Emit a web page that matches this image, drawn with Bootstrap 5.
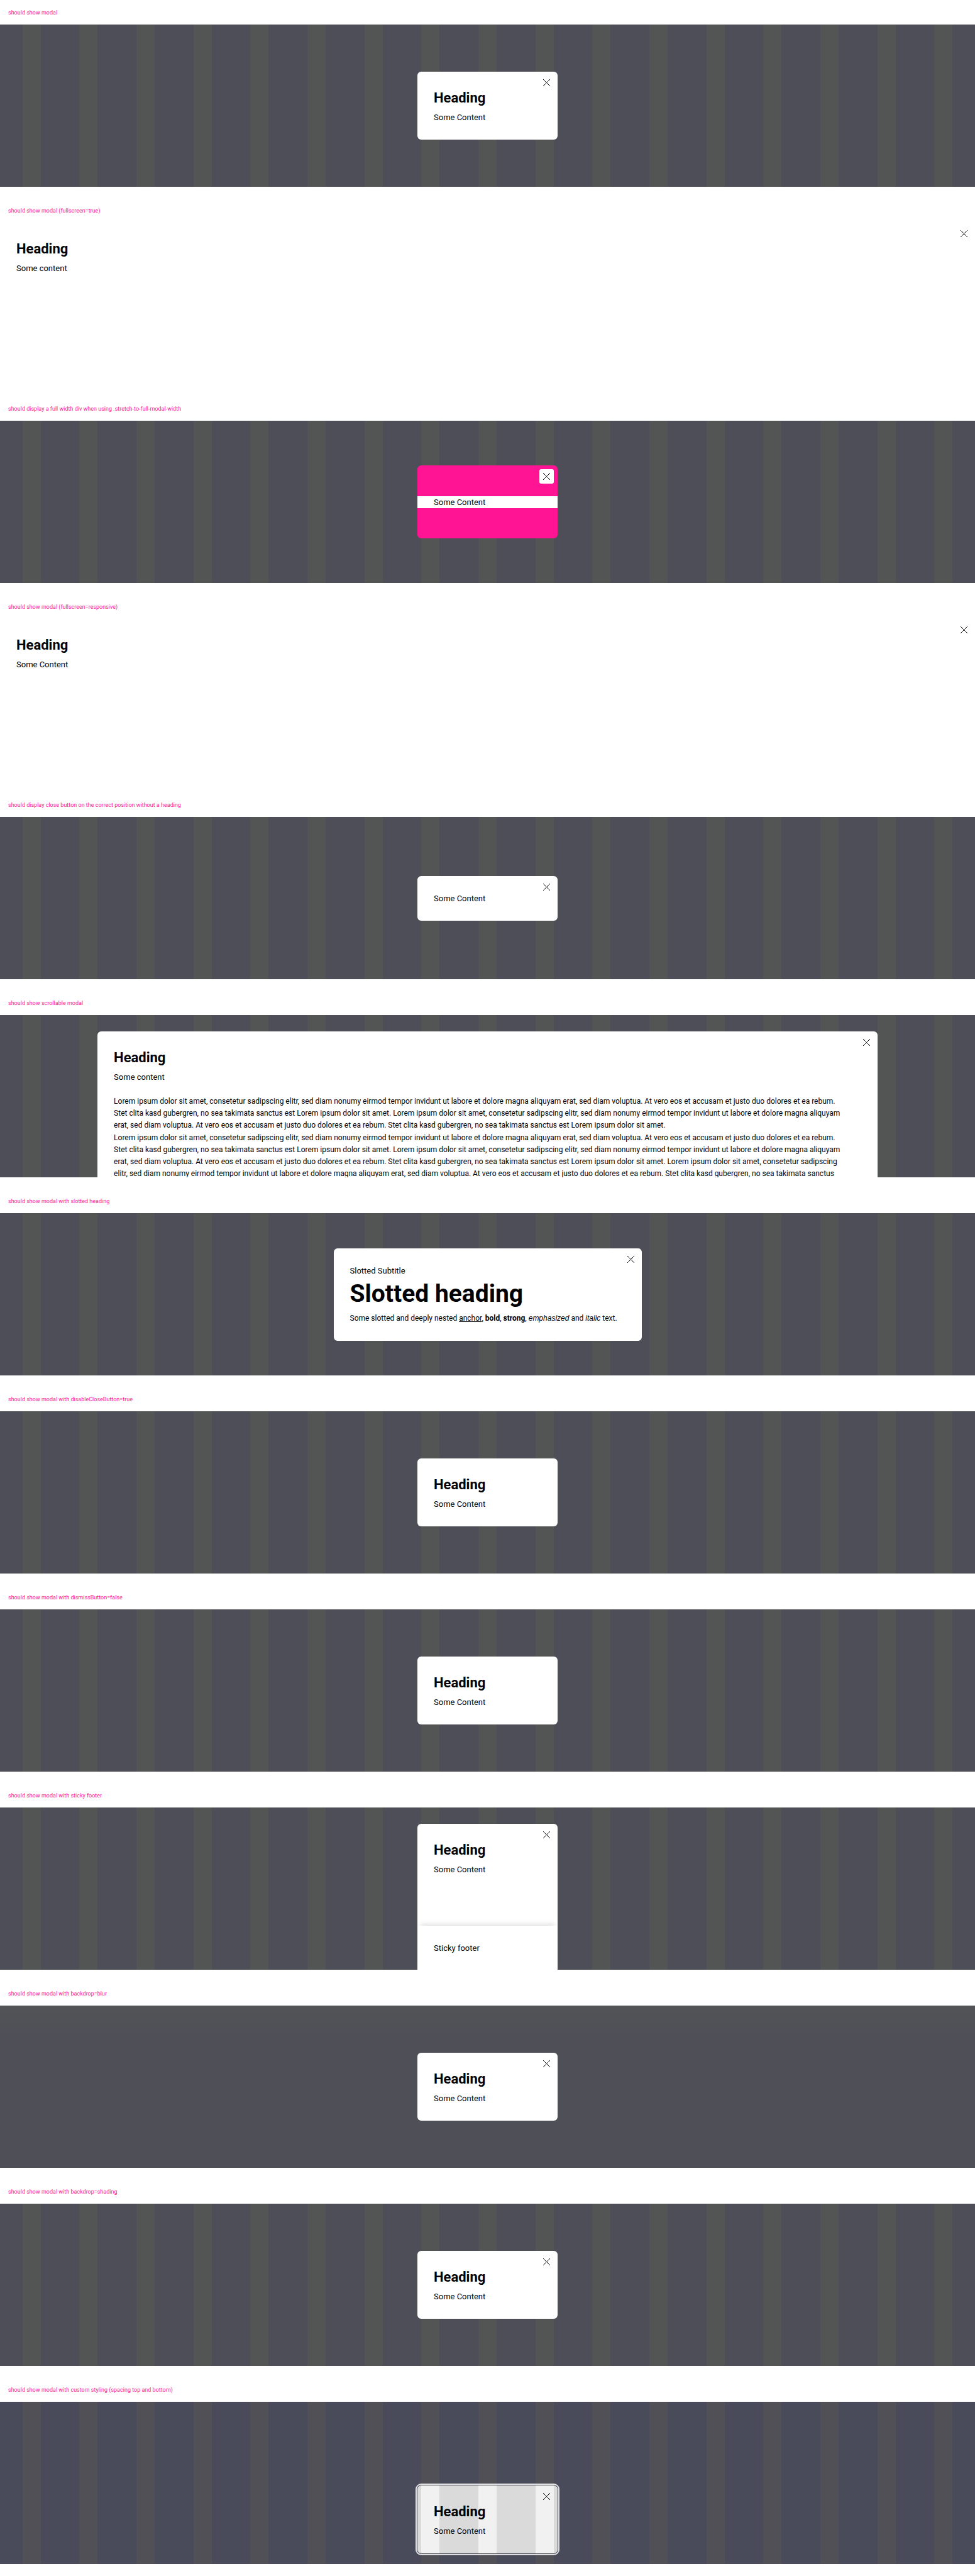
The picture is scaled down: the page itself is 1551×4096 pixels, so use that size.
<!DOCTYPE html>
<html lang="en">
<head>
<meta charset="utf-8">
<meta name="viewport" content="width=device-width, initial-scale=1">
<title>Modal overview</title>
<link href="https://cdn.jsdelivr.net/npm/bootstrap@5.3.0/dist/css/bootstrap.min.css" rel="stylesheet">
<style>
  body { font-family: Roboto, "Liberation Sans", sans-serif; font-size: 13px; line-height: 19px; color: #010205; background: #fff; padding-bottom: 18px; }
  .case-label { font-size: 9px; line-height: 14px; font-weight: 400; color: #ff1493; height: 57px; padding: 0 13px 12px; }
  .case-label-first { height: 39px; }
  .stage { height: 258px; --base: #4e4e58; --band: #535555;
    background: repeating-linear-gradient(90deg, var(--base) 0 2.2917%, var(--band) 2.2917% 4.1667%, var(--base) 4.1667% 5.8464%); }
  .stage-plain { background: #fff; }
  .stage-blur { background: linear-gradient(#525455, #4f4f58 46px); }
  .stage-top { padding-top: 26px; }
  .stage-custom { --base: #4a4b5a; --band: #515057; padding-bottom: 17px; }
  .panel { background: #fff; border-radius: 6px; padding: 26px; min-width: 223px; }
  .panel-wide { width: 80%; }
  .panel-full { width: 100%; border-radius: 0; }
  .panel-slotted { min-width: 490px; }
  .panel-slotted p:last-child { font-size: 12px; }
  .panel h2 { font-size: 22px; line-height: 32px; font-weight: 700; margin: 0 0 5px; }
  .panel h1 { font-size: 39px; line-height: 50px; font-weight: 700; margin: 2px 0 5px; }
  .panel p { margin: 0; }
  .panel em, .panel i { font-family: "Liberation Sans", sans-serif; font-style: italic; }
  .close-x { top: 6px; right: 6px; width: 23px; height: 23px; border: 0; border-radius: 3px; background: #fff; padding: 0; }
  .close-x svg { width: 13px; height: 13px; stroke: #010205; stroke-width: 1; fill: none; }
  .panel-pink { background: #ff1493; padding: 49px 0 48px; }
  .panel-pink p { background: #fff; padding: 0 26px; }
  .footer-sticky { margin: 80px -26px 0; padding: 26px; box-shadow: 0 -7px 8px -5px rgba(0,0,0,.14); }
  .panel-custom { background: linear-gradient(90deg, #dadada 0 2.9%, #f1f1f1 2.9% 15.9%, #dadada 15.9% 43.5%, #f1f1f1 43.5% 56.5%, #dadada 56.5% 84.1%, #f1f1f1 84.1% 97.1%, #dadada 97.1%); outline: 2px solid #dfdfe2; outline-offset: 1px; }
  .panel-custom .close-x { background: transparent; }
  .lorem { white-space: nowrap; font-size: 12px; padding-top: 20px; }
  .lorem + .lorem { padding-top: 1px; }
</style>
<script src="https://cdn.jsdelivr.net/npm/bootstrap@5.3.0/dist/js/bootstrap.bundle.min.js"></script>
</head>
<body>
<svg class="d-none"><symbol id="x" viewBox="0 0 13 13"><path d="M1 1 12 12M12 1 1 12"/></symbol></svg>

<div class="case-label case-label-first d-flex align-items-end">should show modal</div>
<div class="stage d-flex align-items-center justify-content-center">
  <section class="panel position-relative"><button type="button" class="close-x position-absolute d-flex align-items-center justify-content-center" aria-label="Close"><svg><use href="#x"/></svg></button><h2>Heading</h2><p>Some Content</p></section>
</div>

<div class="case-label d-flex align-items-end">should show modal (fullscreen=true)</div>
<div class="stage stage-plain">
  <section class="panel panel-full position-relative"><button type="button" class="close-x position-absolute d-flex align-items-center justify-content-center" aria-label="Close"><svg><use href="#x"/></svg></button><h2>Heading</h2><p>Some content</p></section>
</div>

<div class="case-label d-flex align-items-end">should display a full width div when using .stretch-to-full-modal-width</div>
<div class="stage d-flex align-items-center justify-content-center">
  <section class="panel panel-pink position-relative"><button type="button" class="close-x position-absolute d-flex align-items-center justify-content-center" aria-label="Close"><svg><use href="#x"/></svg></button><p>Some Content</p></section>
</div>

<div class="case-label d-flex align-items-end">should show modal (fullscreen=responsive)</div>
<div class="stage stage-plain">
  <section class="panel panel-full position-relative"><button type="button" class="close-x position-absolute d-flex align-items-center justify-content-center" aria-label="Close"><svg><use href="#x"/></svg></button><h2>Heading</h2><p>Some Content</p></section>
</div>

<div class="case-label d-flex align-items-end">should display close button on the correct position without a heading</div>
<div class="stage d-flex align-items-center justify-content-center">
  <section class="panel position-relative"><button type="button" class="close-x position-absolute d-flex align-items-center justify-content-center" aria-label="Close"><svg><use href="#x"/></svg></button><p>Some Content</p></section>
</div>

<div class="case-label d-flex align-items-end">should show scrollable modal</div>
<div class="stage stage-top d-flex align-items-start justify-content-center overflow-hidden">
  <section class="panel panel-wide position-relative"><button type="button" class="close-x position-absolute d-flex align-items-center justify-content-center" aria-label="Close"><svg><use href="#x"/></svg></button><h2>Heading</h2><p>Some content</p>
    <p class="lorem">Lorem ipsum dolor sit amet, consetetur sadipscing elitr, sed diam nonumy eirmod tempor invidunt ut labore et dolore magna aliquyam erat, sed diam voluptua. At vero eos et accusam et justo duo dolores et ea rebum.<br>Stet clita kasd gubergren, no sea takimata sanctus est Lorem ipsum dolor sit amet. Lorem ipsum dolor sit amet, consetetur sadipscing elitr, sed diam nonumy eirmod tempor invidunt ut labore et dolore magna aliquyam<br>erat, sed diam voluptua. At vero eos et accusam et justo duo dolores et ea rebum. Stet clita kasd gubergren, no sea takimata sanctus est Lorem ipsum dolor sit amet.</p>
    <p class="lorem">Lorem ipsum dolor sit amet, consetetur sadipscing elitr, sed diam nonumy eirmod tempor invidunt ut labore et dolore magna aliquyam erat, sed diam voluptua. At vero eos et accusam et justo duo dolores et ea rebum.<br>Stet clita kasd gubergren, no sea takimata sanctus est Lorem ipsum dolor sit amet. Lorem ipsum dolor sit amet, consetetur sadipscing elitr, sed diam nonumy eirmod tempor invidunt ut labore et dolore magna aliquyam<br>erat, sed diam voluptua. At vero eos et accusam et justo duo dolores et ea rebum. Stet clita kasd gubergren, no sea takimata sanctus est Lorem ipsum dolor sit amet. Lorem ipsum dolor sit amet, consetetur sadipscing<br>elitr, sed diam nonumy eirmod tempor invidunt ut labore et dolore magna aliquyam erat, sed diam voluptua. At vero eos et accusam et justo duo dolores et ea rebum. Stet clita kasd gubergren, no sea takimata sanctus</p></section>
</div>

<div class="case-label d-flex align-items-end">should show modal with slotted heading</div>
<div class="stage d-flex align-items-center justify-content-center">
  <section class="panel panel-slotted position-relative"><button type="button" class="close-x position-absolute d-flex align-items-center justify-content-center" aria-label="Close"><svg><use href="#x"/></svg></button><p>Slotted Subtitle</p><h1>Slotted heading</h1><p>Some slotted and deeply nested <a href="#" class="text-reset">anchor</a>, <b>bold</b>, <strong>strong</strong>, <em>emphasized</em> and <i>italic</i> text.</p></section>
</div>

<div class="case-label d-flex align-items-end">should show modal with disableCloseButton=true</div>
<div class="stage d-flex align-items-center justify-content-center">
  <section class="panel"><h2>Heading</h2><p>Some Content</p></section>
</div>

<div class="case-label d-flex align-items-end">should show modal with dismissButton=false</div>
<div class="stage d-flex align-items-center justify-content-center">
  <section class="panel"><h2>Heading</h2><p>Some Content</p></section>
</div>

<div class="case-label d-flex align-items-end">should show modal with sticky footer</div>
<div class="stage stage-top d-flex align-items-start justify-content-center overflow-hidden">
  <section class="panel position-relative"><button type="button" class="close-x position-absolute d-flex align-items-center justify-content-center" aria-label="Close"><svg><use href="#x"/></svg></button><h2>Heading</h2><p>Some Content</p><div class="footer-sticky">Sticky footer</div></section>
</div>

<div class="case-label d-flex align-items-end">should show modal with backdrop=blur</div>
<div class="stage stage-blur d-flex align-items-center justify-content-center">
  <section class="panel position-relative"><button type="button" class="close-x position-absolute d-flex align-items-center justify-content-center" aria-label="Close"><svg><use href="#x"/></svg></button><h2>Heading</h2><p>Some Content</p></section>
</div>

<div class="case-label d-flex align-items-end">should show modal with backdrop=shading</div>
<div class="stage d-flex align-items-center justify-content-center">
  <section class="panel position-relative"><button type="button" class="close-x position-absolute d-flex align-items-center justify-content-center" aria-label="Close"><svg><use href="#x"/></svg></button><h2>Heading</h2><p>Some Content</p></section>
</div>

<div class="case-label d-flex align-items-end">should show modal with custom styling (spacing top and bottom)</div>
<div class="stage stage-custom d-flex align-items-end justify-content-center">
  <section class="panel panel-custom position-relative"><button type="button" class="close-x position-absolute d-flex align-items-center justify-content-center" aria-label="Close"><svg><use href="#x"/></svg></button><h2>Heading</h2><p>Some Content</p></section>
</div>
</body>
</html>
